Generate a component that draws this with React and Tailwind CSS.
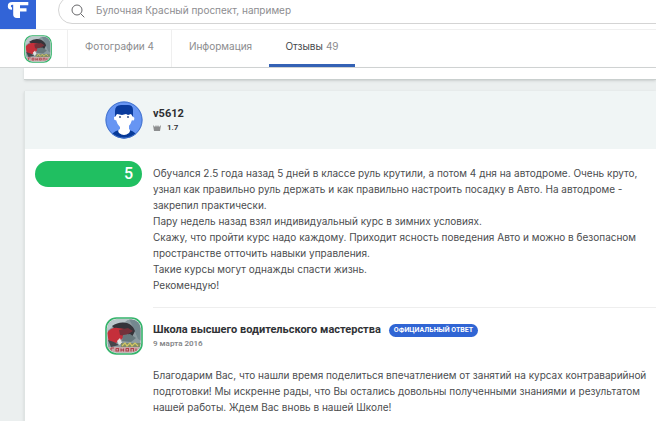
import React from "react";

const review = [
  "Обучался 2.5 года назад 5 дней в классе руль крутили, а потом 4 дня на автодроме. Очень круто,",
  "узнал как правильно руль держать и как правильно настроить посадку в Авто. На автодроме -",
  "закрепил практически.",
  "Пару недель назад взял индивидуальный курс в зимних условиях.",
  "Скажу, что пройти курс надо каждому. Приходит ясность поведения Авто и можно в безопасном",
  "пространстве отточить навыки управления.",
  "Такие курсы могут однажды спасти жизнь.",
  "Рекомендую!",
];

const answer = [
  "Благодарим Вас, что нашли время поделиться впечатлением от занятий на курсах контраварийной",
  "подготовки! Мы искренне рады, что Вы остались довольны полученными знаниями и результатом",
  "нашей работы. Ждем Вас вновь в нашей Школе!",
];

function Lines({ items }) {
  return (
    <p className="whitespace-nowrap font-['Inter','Noto_Sans',sans-serif] text-[10px] leading-4 text-[#4b4d4f]">
      {items.map((line) => (
        <React.Fragment key={line}>
          {line}
          <br />
        </React.Fragment>
      ))}
    </p>
  );
}

function Logo() {
  return (
    <svg viewBox="0 0 36 29" className="h-full w-full" aria-hidden="true">
      <path
        d="M28.300 2H12.500Q7.800 2 7.800 6.200Q7.800 9.800 12 9.800V7.600Q10.800 7.200 10.800 6Q10.800 4.700 12.800 4.700H13.200V14.500Q13.200 17.900 16.800 17.900H20V11.500H26.500V8.300H20V5.300H28.300Z"
        fill="#fff"
      />
    </svg>
  );
}

function SchoolLogo({ className }) {
  return (
    <svg viewBox="0 0 38 38" className={className} role="img" aria-label="Логотип школы">
      <defs>
        <clipPath id="badge">
          <rect x="2.500" y="2.500" width="33" height="33" rx="9" />
        </clipPath>
      </defs>
      <rect x="1" y="1" width="36" height="36" rx="10.500" fill="#e7efeb" stroke="#35b36b" strokeWidth="1.600" />
      <g clipPath="url(#badge)">
        <rect width="38" height="38" fill="#8d9ca2" />
        <path d="M2 2H24L20 5L10 8L2 14Z" fill="#bcc7cb" />
        <path d="M24 2H38V25L33 22L28 10Z" fill="#74888f" />
        <path d="M7 9Q14 4 22 6Q28 8 30 14L27 20L22 17L12 14Z" fill="#35343a" />
        <path d="M2 16Q6 10 13 11L20 12L25 14L21 17L17 22L11 26L4 25Z" fill="#c52f3a" />
        <path d="M14 13L23 11L28 14L20 19L15 18Z" fill="#74323a" />
        <path d="M18 18L25 17L31 21L26 25L17 24Z" fill="#68797d" />
        <path d="M3 23L9 25L14 28L6 30Z" fill="#45454a" />
        <path d="M12 24L15 21L17 26L14 28Z" fill="#e4e4e2" />
        <path d="M16 26H36V30H16Z" fill="#7f8b68" />
        <path d="M17 29L20 26L22 29L25 26L27 29L30 26L33 29" fill="none" stroke="#d3c763" strokeWidth="1.200" />
        <path d="M2 30H36V38H2Z" fill="#c9a9aa" />
        <path
          d="M6 31V34.500M6 31H9M11 31.500V34H13.500V31.500H11M16 34.500V31.500M18.500 34.500V31.500M16 33H18.500M21 31.500V34H23.500V31.500H21M26 34.500V31.500H28.500V34.500M31 31.500V34"
          fill="none"
          stroke="#b0404c"
          strokeWidth="1.100"
        />
      </g>
    </svg>
  );
}

function UserAvatar() {
  return (
    <svg viewBox="0 0 38 38" className="size-[38px]" role="img" aria-label="v5612">
      <defs>
        <clipPath id="user">
          <circle cx="19" cy="19" r="18.500" />
        </clipPath>
      </defs>
      <circle cx="19" cy="19" r="18.500" fill="#6795f3" />
      <g clipPath="url(#user)">
        <path d="M5 38Q6 31 14 29H24Q32 31 33 38Z" fill="#073a98" />
        <path d="M15 23V28Q12 29 14 32Q19 36 24 32Q26 29 24 28V23Z" fill="#fff" />
        <path d="M10 12H28V16Q30 16 29 19Q28 20 27 19Q26 23 23 26Q19 29 15 26Q12 23 11 19Q9 20 9 17Q9 15 10 16Z" fill="#fff" />
        <path d="M10 16V10Q10 4 16 4H23Q28 4 28 9V16L26 13L23 14L21 13L17 14L12 13Z" fill="#0a3b9d" />
        <circle cx="15" cy="16" r="0.900" fill="#26447d" />
        <circle cx="23" cy="16" r="0.900" fill="#26447d" />
      </g>
      <circle cx="19" cy="19" r="18" fill="none" stroke="#4675cc" strokeWidth="1" />
    </svg>
  );
}

export default function App() {
  return (
    <div className="h-screen overflow-hidden bg-[#ebefef] font-['Roboto','Noto_Sans',sans-serif]">
      <header className="bg-white font-['Inter','Noto_Sans',sans-serif]">
        <div className="flex h-[29px]">
          <a href="#home" aria-label="Главная" className="w-9 shrink-0 bg-[#3264d7]">
            <Logo />
          </a>
          <div className="ml-[22px] flex-1 overflow-hidden">
            <label className="-mt-1 -mr-5 flex h-7 items-center rounded-l-full border border-[#d4d4d4] pl-3">
              <svg viewBox="0 0 14 14" className="mt-0.5 size-3.5 shrink-0" fill="none" stroke="#68686b" aria-hidden="true">
                <circle cx="6" cy="6" r="5" />
                <path d="M9.600 9.600L13.300 13.300" />
              </svg>
              <input
                type="search"
                aria-label="Поиск"
                placeholder="Булочная Красный проспект, например"
                className="ml-[11px] h-4 min-w-0 flex-1 text-[10px] text-[#4b4d4f] outline-none placeholder:text-[#8d8d90]"
              />
            </label>
          </div>
        </div>
        <nav className="flex h-[39px] border-t border-b border-t-[#f0f0f0] border-b-[#d3d6d6] text-[10px] text-[#8b8c8e]">
          <a href="#school" className="flex w-[67px] items-center pl-6">
            <SchoolLogo className="size-7" />
          </a>
          <a href="#photos" className="flex w-[104px] items-center justify-center border-l border-[#efefef] pb-1">Фотографии 4</a>
          <a href="#info" className="flex w-[98px] items-center justify-center border-l border-[#efefef] pb-1">Информация</a>
          <a href="#reviews" aria-current="page" className="flex w-[86px] items-center justify-center gap-[3px] border-b-3 border-[#3462b5] pb-px">
            <span className="text-[#45474b]">Отзывы</span>
            <span>49</span>
          </a>
        </nav>
      </header>
      <main className="pl-6">
        <div className="h-3 border-b border-[#c9cfce] bg-white shadow-sm" />
        <article className="mt-[11px] h-screen border-l border-[#dfe4e3] bg-white shadow-sm">
          <header className="flex h-[58px] items-center bg-[#f0f5f5] pl-20">
            <UserAvatar />
            <div className="ml-2.5 text-[#2d2f32]">
              <h2 className="text-[11px] leading-4 font-bold">v5612</h2>
              <div className="flex h-3 items-center gap-1.5 text-[8px] font-semibold">
                <svg viewBox="0 0 8 6" className="h-1.5 w-2" fill="#8c8e8f" aria-hidden="true">
                  <path d="M0 0L2 2L3 0L4 2L5 0L6 2L8 0L7 6H1Z" />
                </svg>
                <span>1.7</span>
              </div>
            </div>
          </header>
          <section className="flex pt-3 pl-2.5">
            <div className="flex h-[26px] w-[107px] shrink-0 items-center justify-end rounded-full bg-[#20bf61] pr-[9px] text-base font-medium text-white">5</div>
            <div className="ml-[11px] flex-1 pt-1">
              <Lines items={review} />
              <hr className="mt-3.5 border-[#eeeeee]" />
            </div>
          </section>
          <section className="flex pt-[9px] pl-20">
            <SchoolLogo className="size-[38px] shrink-0" />
            <div className="ml-2.5 min-w-0 flex-1 pt-[5px]">
              <div className="flex items-center gap-2 whitespace-nowrap">
                <h3 className="text-[11px] leading-4 font-bold text-[#303236]">Школа высшего водительского мастерства</h3>
                <span className="h-[13px] rounded-full bg-[#3065d4] px-[5px] text-[7px] leading-[13px] font-bold text-white uppercase">Официальный ответ</span>
              </div>
              <time dateTime="2016-03-09" className="block text-[8px] leading-3 font-semibold text-[#858789]">9 марта 2016</time>
              <div className="mt-[17px]">
                <Lines items={answer} />
              </div>
            </div>
          </section>
        </article>
      </main>
    </div>
  );
}
